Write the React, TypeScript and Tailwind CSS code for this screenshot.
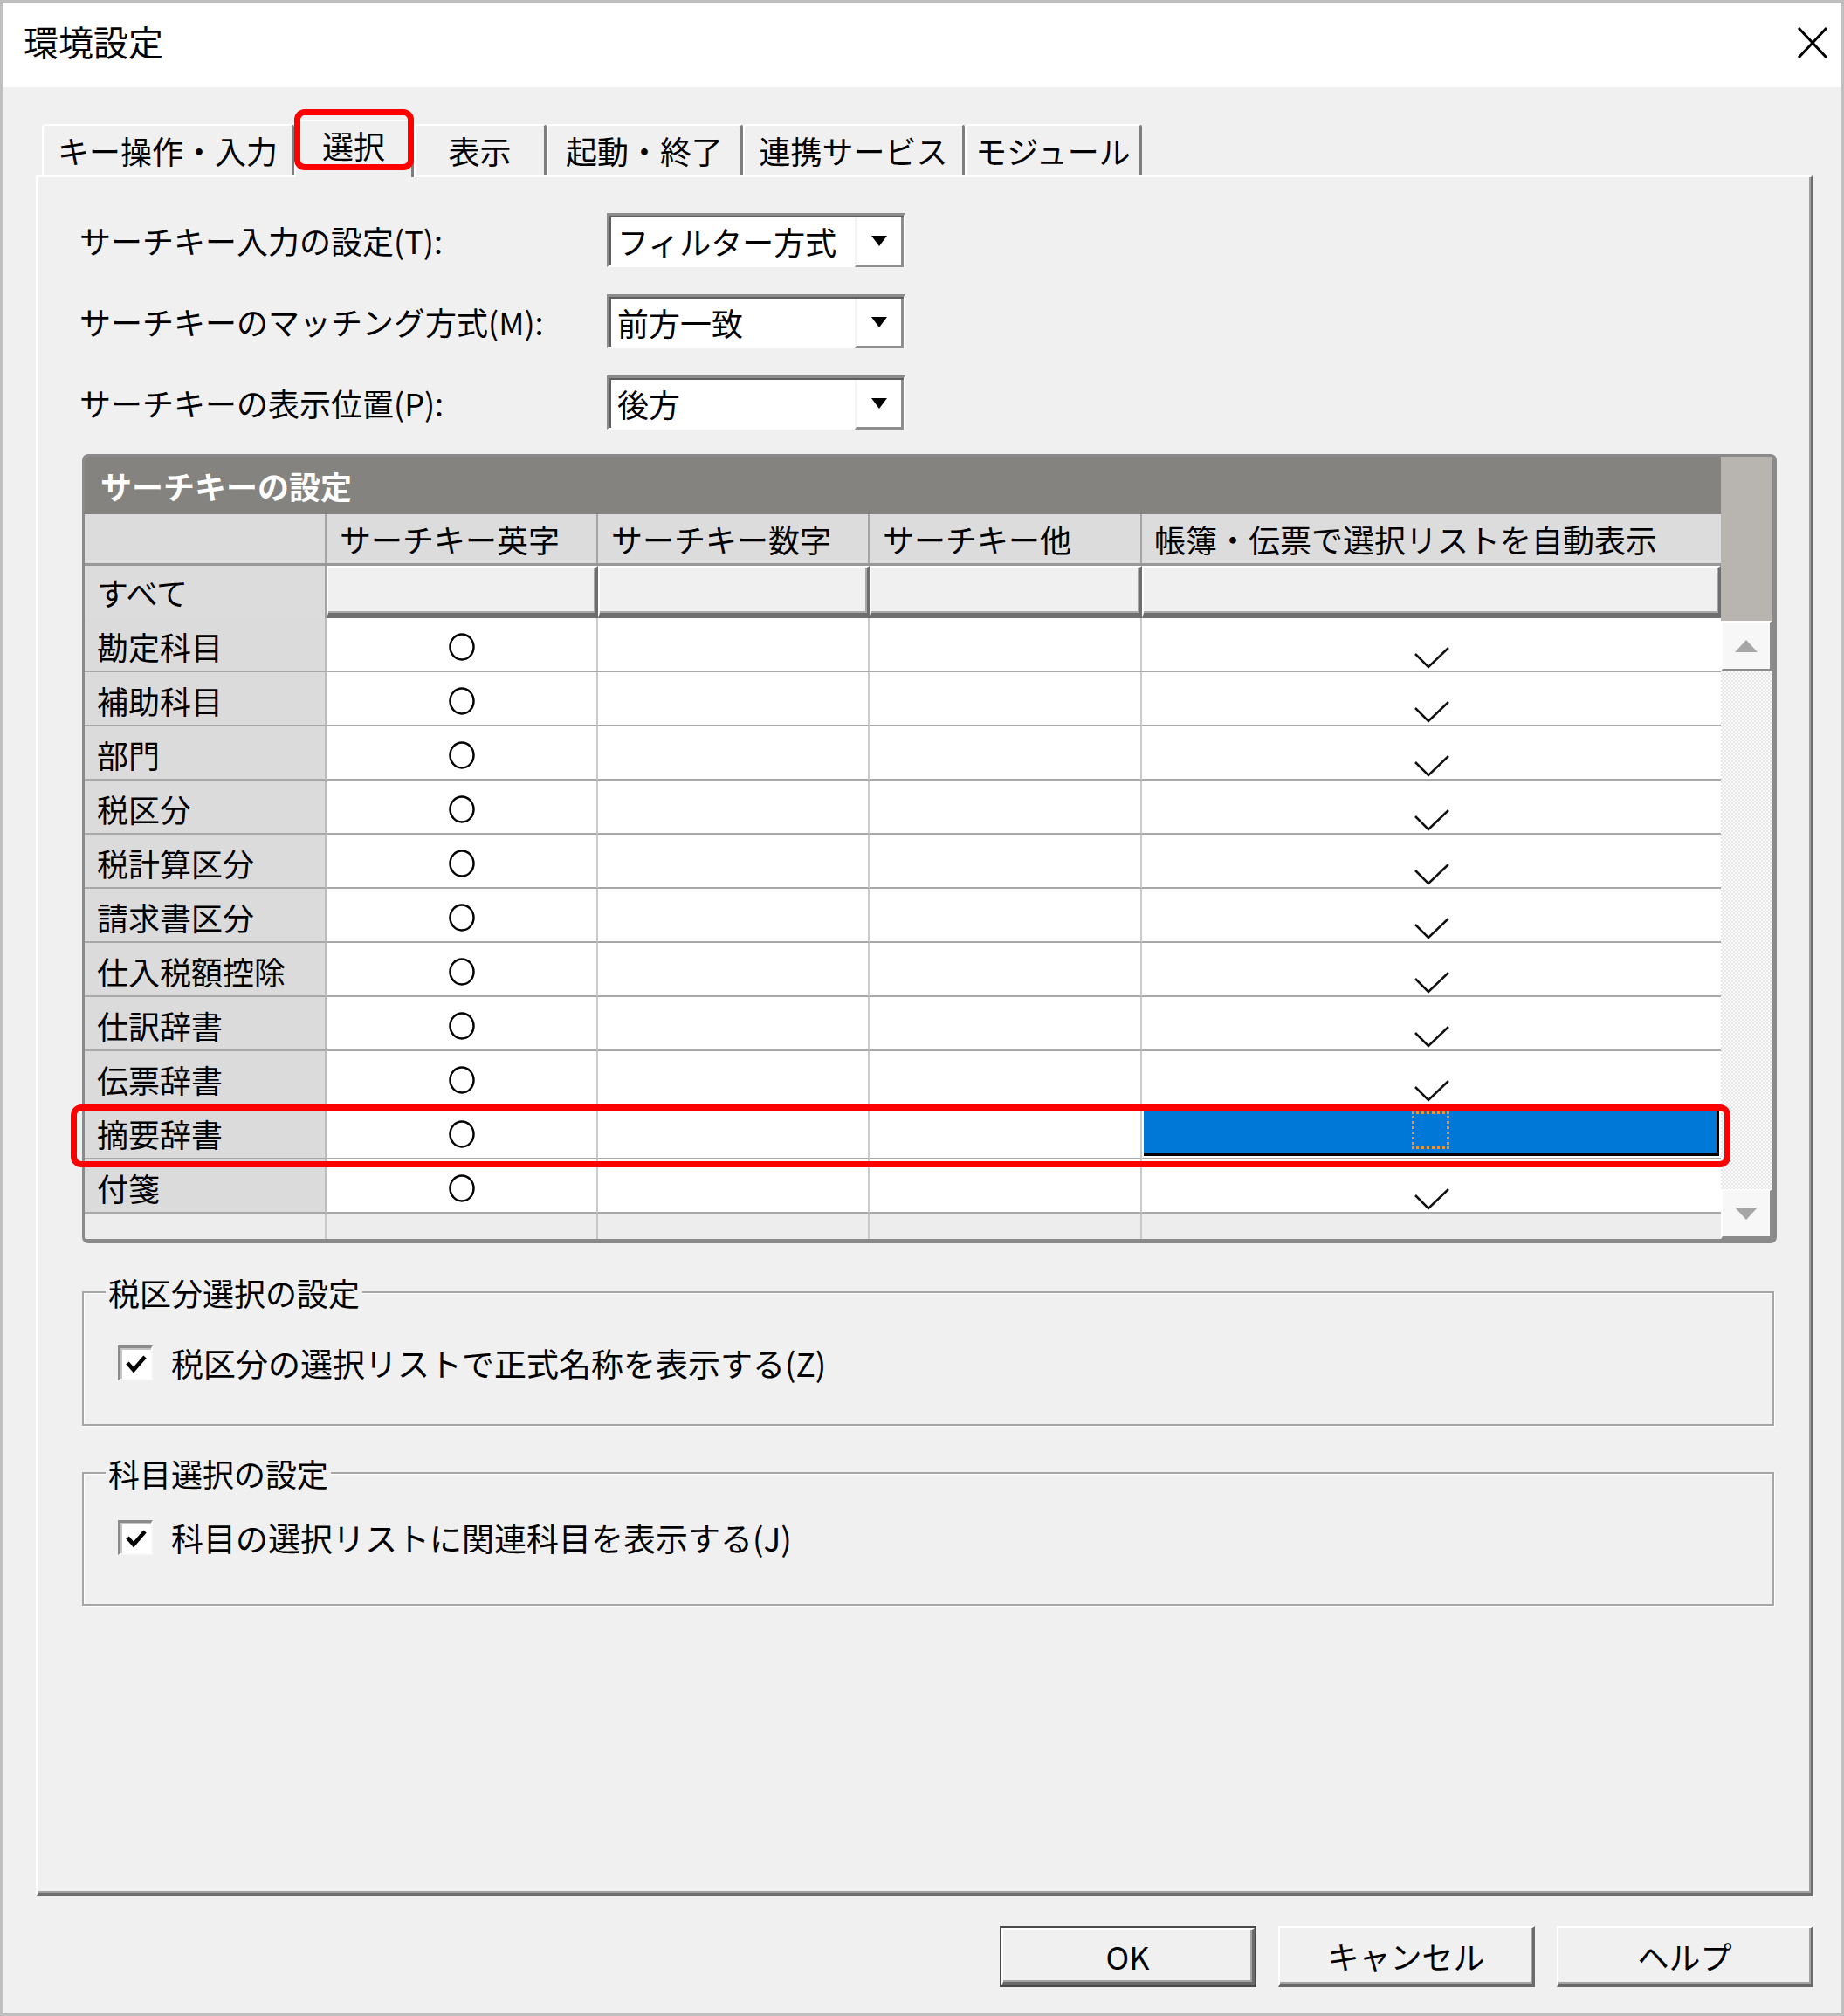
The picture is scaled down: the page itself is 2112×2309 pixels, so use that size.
import React from 'react';

const rows = [
  '勘定科目',
  '補助科目',
  '部門',
  '税区分',
  '税計算区分',
  '請求書区分',
  '仕入税額控除',
  '仕訳辞書',
  '伝票辞書',
  '摘要辞書',
  '付箋',
];

const tabs = [
  { label: 'キー操作・入力', w: 'w-[289px]' },
  { label: '選択', w: 'w-[137px]', active: true },
  { label: '表示', w: 'w-[152px]' },
  { label: '起動・終了', w: 'w-[225px]' },
  { label: '連携サービス', w: 'w-[254px]' },
  { label: 'モジュール', w: 'w-[203px]' },
];

const Circle = () => (
  <svg width="32" height="34" viewBox="0 0 32 34">
    <ellipse cx="16" cy="17" rx="13.5" ry="14.5" fill="none" stroke="#000" strokeWidth="2.5" />
  </svg>
);

const Tick = () => (
  <svg width="40" height="26" viewBox="0 0 40 26">
    <polyline points="1,9 16,24 39,2" fill="none" stroke="#111" strokeWidth="2.5" />
  </svg>
);

const DownArrow = () => (
  <svg width="18" height="12" viewBox="0 0 18 12">
    <polygon points="0,0 18,0 9,12" fill="#000" />
  </svg>
);

const Combo: React.FC<{ label: string; value: string }> = ({ label, value }) => (
  <div className="flex items-center h-[62px] ml-[47px]">
    <div className="w-[604px] text-[36px] leading-none">{label}</div>
    <div className="w-[342px] h-[62px] flex bg-white border-t-[3px] border-l-[3px] border-t-[#8c8c8c] border-l-[#8c8c8c] border-r-2 border-b-2 border-r-white border-b-white shadow-[inset_2px_2px_0_#5e5e5e]">
      <div className="flex-1 flex items-center pl-[9px] text-[36px] leading-none">{value}</div>
      <div className="w-[56px] h-full flex items-center justify-center bg-white border-l-2 border-l-[#f4f4f4] border-r-[3px] border-b-[3px] border-r-[#8e8e8e] border-b-[#8e8e8e] mt-[2px]">
        <DownArrow />
      </div>
    </div>
  </div>
);

const CheckBox = () => (
  <div className="w-[40px] h-[40px] bg-white border-t-[3px] border-l-[3px] border-t-[#8a8a8a] border-l-[#8a8a8a] border-r-2 border-b-2 border-r-[#f8f8f8] border-b-[#f8f8f8] shadow-[inset_2px_2px_0_#c4c4c4] flex items-center justify-center">
    <svg width="26" height="24" viewBox="0 0 26 24">
      <polyline points="3,11 10,19 23,4" fill="none" stroke="#000" strokeWidth="4.5" />
    </svg>
  </div>
);

const Group: React.FC<{ title: string; text: string; className: string; inner: string }> = ({ title, text, className, inner }) => (
  <fieldset className={`ml-[50px] w-[1938px] border-2 border-[#a6a6a6] shadow-[1px_1px_0_#ffffff,inset_1px_1px_0_#ffffff] p-0 ${className}`}>
    <legend className="ml-[25px] px-[3px] bg-[#f0f0f0] text-[36px] leading-[48px]">{title}</legend>
    <div className={`flex items-center gap-[21px] pl-[39px] ${inner}`}>
      <CheckBox />
      <span className="text-[37px] leading-none">{text}</span>
    </div>
  </fieldset>
);

const WinButton: React.FC<{ label: string; def?: boolean }> = ({ label, def }) => (
  <div className={def ? 'w-[294px] h-[70px] border-2 border-[#4a4a4a]' : 'w-[294px] h-[70px]'}>
    <div className="w-full h-full bg-[#f0f0f0] border-t-2 border-l-2 border-t-white border-l-white border-r-[3px] border-b-[4px] border-r-[#6a6a6a] border-b-[#6a6a6a] shadow-[inset_-2px_-2px_0_#a3a3a3] flex items-center justify-center text-[36px] leading-none">
      {label}
    </div>
  </div>
);

const ScrollBtn: React.FC<{ up?: boolean; h: string }> = ({ up, h }) => (
  <div className={`${h} bg-[#f7f7f7] border-t-2 border-l-2 border-t-white border-l-white border-r-[3px] border-b-[3px] border-r-[#8c8c8c] border-b-[#8c8c8c] flex items-center justify-center`}>
    <svg width="26" height="14" viewBox="0 0 26 14">
      <polygon points={up ? '0,14 26,14 13,0' : '0,0 26,0 13,14'} fill="#a6a6a6" />
    </svg>
  </div>
);

const cellLine = 'border-r-2 border-b-2 border-r-[#cbcbcb] border-b-[#a8a8a8]';

const Grid = () => (
  <div className="relative ml-[50px] mt-[28px] w-[1941px] h-[904px]">
    <div className="w-full h-full flex rounded-[7px] overflow-hidden border-t-[3px] border-l-[3px] border-t-[#8a8a8a] border-l-[#8a8a8a] border-r-[5px] border-b-[5px] border-r-[#8a8a8a] border-b-[#8a8a8a] bg-[#ececec]">
      <div className="w-[1874px] flex flex-col">
        <div className="h-[66px] bg-[#858380] flex items-center pl-[18px] text-white font-bold text-[36px] leading-none">
          サーチキーの設定
        </div>
        {/* header */}
        <div className="h-[59px] flex bg-[#dddcdc] border-b-[3px] border-b-[#999999] text-[36px] leading-none">
          <div className="w-[277px] border-r-2 border-r-[#a4a4a4]" />
          <div className="w-[311px] border-r-2 border-r-[#a4a4a4] flex items-center pl-[15px]">サーチキー英字</div>
          <div className="w-[311px] border-r-2 border-r-[#a4a4a4] flex items-center pl-[15px]">サーチキー数字</div>
          <div className="w-[312px] border-r-2 border-r-[#a4a4a4] flex items-center pl-[15px]">サーチキー他</div>
          <div className="w-[663px] flex items-center pl-[14px]">帳簿・伝票で選択リストを自動表示</div>
        </div>
        {/* all row */}
        <div className="h-[60px] flex text-[36px] leading-none">
          <div className="w-[277px] bg-[#dcdcdc] border-r-2 border-r-[#a4a4a4] flex items-center pl-[14px]">すべて</div>
          {['w-[311px]', 'w-[311px]', 'w-[312px]', 'w-[663px]'].map((w, i) => (
            <div key={i} className={`${w} bg-[#f0f0f0] border-t-2 border-l-2 border-t-white border-l-white border-r-[3px] border-b-[6px] border-r-[#6e6e6e] border-b-[#6e6e6e] shadow-[inset_-2px_-2px_0_#a8a8a8]`} />
          ))}
        </div>
        {rows.map((name) => {
          const sel = name === '摘要辞書';
          return (
            <div key={name} className="h-[62px] flex text-[36px] leading-none">
              <div className="w-[277px] bg-[#dcdbdb] border-r-2 border-b-2 border-r-[#bdbdbd] border-b-[#a8a8a8] flex items-center pl-[14px] pt-[3px]">
                {name}
              </div>
              <div className={`w-[311px] bg-white ${cellLine} flex items-center justify-center pt-[6px]`}>
                <Circle />
              </div>
              <div className={`w-[311px] bg-white ${cellLine}`} />
              <div className={`w-[312px] bg-white ${cellLine}`} />
              {sel ? (
                <div className="w-[663px] bg-white border-b-2 border-b-[#a8a8a8] p-[2px]">
                  <div className="w-full h-full bg-[#0078d7] border-r-[3px] border-b-[3px] border-black flex items-center justify-center">
                    <div className="w-[43px] h-[43px] border-[3px] border-dotted border-[#e9963a]" />
                  </div>
                </div>
              ) : (
                <div className="w-[663px] bg-white border-b-2 border-b-[#a8a8a8] flex justify-center pt-[32px]">
                  <Tick />
                </div>
              )}
            </div>
          );
        })}
        <div className="flex-1 flex bg-[#ededed]">
          <div className="w-[277px] border-r-2 border-r-[#c8c8c8]" />
          <div className="w-[311px] border-r-2 border-r-[#c8c8c8]" />
          <div className="w-[311px] border-r-2 border-r-[#c8c8c8]" />
          <div className="w-[312px] border-r-2 border-r-[#c8c8c8]" />
          <div className="w-[663px]" />
        </div>
      </div>
      <div className="w-[59px] flex flex-col">
        <div className="h-[188px] bg-[#b8b5b0]" />
        <ScrollBtn up h="h-[58px]" />
        <div className="flex-1 bg-[repeating-conic-gradient(#e6e6e6_0_25%,#fbfbfb_0_50%)] bg-[length:4px_4px]" />
        <ScrollBtn h="h-[57px]" />
      </div>
    </div>
    {/* annotation */}
    <div className="absolute left-[-13px] top-[745px] w-[1901px] h-[72px] border-[7px] border-[#ff0000] rounded-[12px]" />
  </div>
);

export default function App() {
  return (
    <div className="w-[2112px] h-[2309px] border-[3px] border-[#bfbfbf] bg-[#f0f0f0] flex flex-col text-black font-['Noto_Sans_CJK_JP','Noto_Sans',sans-serif]">
      {/* title bar */}
      <div className="h-[97px] bg-white flex items-center justify-between pl-[24px] pr-[15px] pb-[10px]">
        <span className="text-[40px] leading-none">環境設定</span>
        <svg width="36" height="38" viewBox="0 0 36 38" className="mt-[4px]">
          <path d="M2 2 L34 36 M34 2 L2 36" stroke="#000" strokeWidth="3" fill="none" />
        </svg>
      </div>

      {/* tabs */}
      <div className="relative h-[100px] flex items-end pl-[45px]">
        {tabs.map((t) =>
          t.active ? (
            <div
              key={t.label}
              className={`${t.w} relative z-10 h-[66px] -mb-[3px] bg-[#f0f0f0] border-t-2 border-l-2 border-t-white border-l-white border-r-[3px] border-r-[#7e7e7e] rounded-t-[4px] flex items-center justify-center pb-[10px] text-[36px] leading-none`}
            >
              {t.label}
            </div>
          ) : (
            <div
              key={t.label}
              className={`${t.w} h-[58px] bg-[#f0f0f0] border-t-2 border-l-2 border-t-white border-l-white border-r-[3px] border-r-[#7e7e7e] rounded-t-[4px] flex items-center justify-center text-[36px] leading-none`}
            >
              {t.label}
            </div>
          )
        )}
        <div className="absolute left-[334px] top-[25px] w-[137px] h-[70px] border-[7px] border-[#ff0000] rounded-[12px] z-20" />
      </div>

      {/* tab page */}
      <div className="ml-[38px] w-[2036px] h-[1972px] border-t-[3px] border-l-[3px] border-t-white border-l-white border-r-[3px] border-b-[4px] border-r-[#6e6e6e] border-b-[#6e6e6e] shadow-[inset_-2px_-2px_0_#a0a0a0] flex flex-col">
        <div className="pt-[41px] flex flex-col gap-[31px]">
          <Combo label="サーチキー入力の設定(T):" value="フィルター方式" />
          <Combo label="サーチキーのマッチング方式(M):" value="前方一致" />
          <Combo label="サーチキーの表示位置(P):" value="後方" />
        </div>
        <Grid />
        <Group className="mt-[32px]" inner="pt-[37px] pb-[50px]" title="税区分選択の設定" text="税区分の選択リストで正式名称を表示する(Z)" />
        <Group className="mt-[30px]" inner="pt-[30px] pb-[56px]" title="科目選択の設定" text="科目の選択リストに関連科目を表示する(J)" />
      </div>

      {/* buttons */}
      <div className="mt-[34px] flex justify-end gap-[25px] pr-[32px]">
        <WinButton label="OK" def />
        <WinButton label="キャンセル" />
        <WinButton label="ヘルプ" />
      </div>
    </div>
  );
}
